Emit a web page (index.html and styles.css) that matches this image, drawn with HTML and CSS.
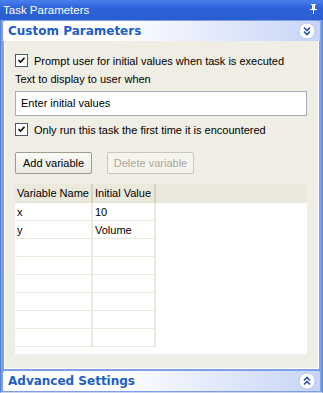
FILE: index.html
```html
<!DOCTYPE html>
<html lang="en">
<head>
    <meta charset="UTF-8">
    <meta name="viewport" content="width=device-width, initial-scale=1.0">
    <title>Task Parameters</title>
    <link rel="stylesheet" href="styles.css">
</head>
<body>
    <div class="window">
        <div class="title-bar">
            <span>Task Parameters</span>
            <svg class="pin" width="9" height="10" viewBox="0 0 9 10">
                <path d="M2 0h5v1h-1v4h2v1h-3v4h-1v-4h-3v-1h2v-4h-1z" fill="#fff"/>
                <path d="M4 1h1v4h-1z" fill="#c9d6f5"/>
            </svg>
        </div>

        <div class="section-header">
            <span>Custom Parameters</span>
            <svg class="chevron" width="18" height="18" viewBox="0 0 18 18">
                <circle cx="9" cy="9" r="8" fill="#fff" stroke="#b8c8ee"/>
                <path d="M6 5.5l3 3 3-3M6 9.5l3 3 3-3" fill="none" stroke="#2a4fb0" stroke-width="1.6"/>
            </svg>
        </div>

        <div class="section-body">
            <label class="check-row">
                <span class="checkbox">
                    <svg width="7" height="7" viewBox="0 0 7 7"><path d="M0.5 3l2 2L6.5 0.8" fill="none" stroke="#111" stroke-width="1.6"/></svg>
                </span>
                Prompt user for initial values when task is executed
            </label>

            <div class="field-label">Text to display to user when</div>
            <div class="text-box">Enter initial values</div>

            <label class="check-row">
                <span class="checkbox">
                    <svg width="7" height="7" viewBox="0 0 7 7"><path d="M0.5 3l2 2L6.5 0.8" fill="none" stroke="#111" stroke-width="1.6"/></svg>
                </span>
                Only run this task the first time it is encountered
            </label>

            <div class="buttons">
                <button class="btn btn-add">Add variable</button>
                <button class="btn btn-delete" disabled>Delete variable</button>
            </div>

            <div class="grid">
                <table>
                    <colgroup>
                        <col class="col-name">
                        <col class="col-value">
                        <col>
                    </colgroup>
                    <thead>
                        <tr><th>Variable Name</th><th>Initial Value</th><th class="filler"></th></tr>
                    </thead>
                    <tbody>
                        <tr><td>x</td><td>10</td><td class="filler"></td></tr>
                        <tr><td>y</td><td>Volume</td><td class="filler"></td></tr>
                        <tr><td></td><td></td><td class="filler"></td></tr>
                        <tr><td></td><td></td><td class="filler"></td></tr>
                        <tr><td></td><td></td><td class="filler"></td></tr>
                        <tr><td></td><td></td><td class="filler"></td></tr>
                        <tr><td></td><td></td><td class="filler"></td></tr>
                        <tr><td></td><td></td><td class="filler"></td></tr>
                    </tbody>
                </table>
            </div>
        </div>

        <div class="section-header">
            <span>Advanced Settings</span>
            <svg class="chevron" width="18" height="18" viewBox="0 0 18 18">
                <circle cx="9" cy="9" r="8" fill="#fff" stroke="#b8c8ee"/>
                <path d="M6 8.5l3-3 3 3M6 12.5l3-3 3 3" fill="none" stroke="#2a4fb0" stroke-width="1.6"/>
            </svg>
        </div>
    </div>
</body>
</html>
```

FILE: styles.css
```css
html, body {
    margin: 0;
    padding: 0;
}
body {
    font-family: "Liberation Sans", sans-serif;
    font-size: 11px;
    color: #000;
    background: #fff;
}
.window {
    width: 323px;
    height: 393px;
    box-sizing: border-box;
    display: flex;
    flex-direction: column;
    background: #7f9fe4;
    border-left: 1px solid #5a7fd6;
    border-right: 1px solid #5a7fd6;
    border-bottom: 1px solid #c9d4ee;
}
.title-bar {
    height: 20px;
    display: flex;
    align-items: center;
    justify-content: space-between;
    padding: 0 5px 0 3px;
    background: linear-gradient(to bottom, #4a80ec 0%, #2d63d8 40%, #2a5dd2 100%);
    color: #fff;
    font-size: 11.5px;
    margin: 0 -1px;
}
.pin {
    margin-top: -2px;
}
.section-header {
    height: 20px;
    margin: 1px 2px 0;
    display: flex;
    align-items: center;
    justify-content: space-between;
    padding: 0 4px 0 5px;
    background: linear-gradient(to right, #fff 0%, #fff 35%, #c7d4f7 100%);
    border-radius: 2px 2px 0 0;
    color: #215dc6;
    font-weight: bold;
    font-family: "DejaVu Sans", sans-serif;
    font-size: 12px;
}
.section-header:last-child {
    margin-top: 2px;
    margin-bottom: 1px;
}
.section-body {
    flex: 1;
    margin: 0 3px;
    padding: 6px 11px 14px 10px;
    background: linear-gradient(to bottom, #f0eee4 0%, #efeee6 100%);
    border: 1px solid #fff;
    border-top: none;
}
.check-row {
    display: flex;
    align-items: center;
    gap: 6px;
    height: 19px;
    margin-top: 4px;
    white-space: nowrap;
}
.checkbox {
    width: 11px;
    height: 11px;
    border: 1px solid #4a5866;
    background: #fff;
    display: flex;
    align-items: center;
    justify-content: center;
}
.field-label {
    margin-top: 3px;
    height: 16px;
}
.text-box {
    margin-top: 2px;
    height: 23px;
    line-height: 23px;
    padding: 0 5px;
    background: #fff;
    border: 1px solid #a5acb5;
}
.check-row + .buttons {
    margin-top: 13px;
}
.buttons {
    display: flex;
    gap: 15px;
}
.btn {
    height: 22px;
    padding: 0;
    font-family: inherit;
    font-size: 11px;
    color: #000;
    background: linear-gradient(to bottom, #fafaf6, #ecebe4);
    border: 1px solid #9c9b92;
    border-radius: 2px;
}
.btn-add {
    width: 77px;
}
.btn-delete {
    width: 87px;
}
.btn:disabled {
    color: #aca899;
    border-color: #c9c7ba;
    background: #f5f4ee;
}
.grid {
    margin-top: 10px;
    height: 170px;
    background: #fff;
    overflow: hidden;
}
.grid table {
    border-collapse: collapse;
    table-layout: fixed;
    width: 100%;
}
.col-name {
    width: 77px;
}
.col-value {
    width: 63px;
}
.grid th {
    height: 18px;
    padding: 0 2px;
    text-align: left;
    font-weight: normal;
    white-space: nowrap;
    background: #ebe9dc;
    border-right: 2px solid #d6d2c2;
    border-bottom: 1px solid #e3e0d2;
}
.grid td {
    height: 17px;
    padding: 0 2px;
    border-right: 2px solid #ebe9dc;
    border-bottom: 1px solid #ebe9dc;
}
.grid th.filler {
    border: none;
}
.grid td.filler {
    border: none;
}
```
